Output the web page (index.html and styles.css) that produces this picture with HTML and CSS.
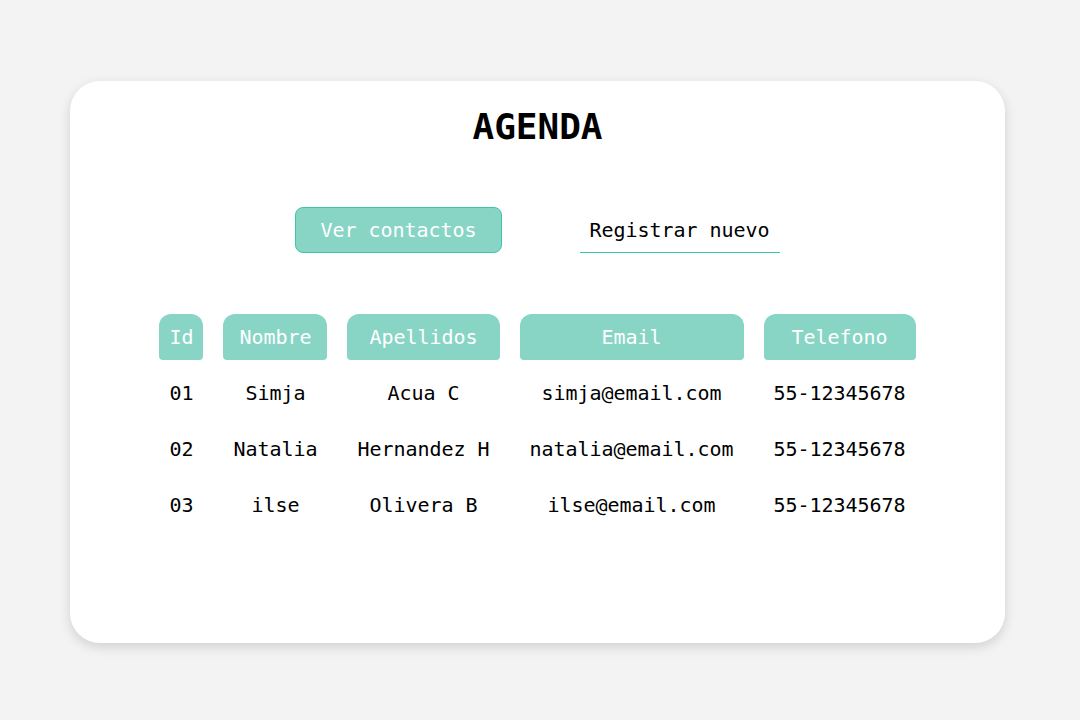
FILE: index.html
```html
<!DOCTYPE html>
<html lang="es">
<head>
<meta charset="utf-8">
<title>Agenda</title>
<link rel="stylesheet" href="styles.css">
</head>
<body>
<main class="card">
  <h1 class="title">AGENDA</h1>
  <nav class="actions">
    <button class="btn btn-primary">Ver contactos</button>
    <button class="btn btn-link">Registrar nuevo</button>
  </nav>
  <table class="contacts">
    <thead>
      <tr>
        <th>Id</th>
        <th>Nombre</th>
        <th>Apellidos</th>
        <th>Email</th>
        <th>Telefono</th>
      </tr>
    </thead>
    <tbody>
      <tr><td>01</td><td>Simja</td><td>Acua C</td><td>simja@email.com</td><td>55-12345678</td></tr>
      <tr><td>02</td><td>Natalia</td><td>Hernandez H</td><td>natalia@email.com</td><td>55-12345678</td></tr>
      <tr><td>03</td><td>ilse</td><td>Olivera B</td><td>ilse@email.com</td><td>55-12345678</td></tr>
    </tbody>
  </table>
</main>
</body>
</html>
```
FILE: styles.css
```css
* { box-sizing: border-box; }
html, body { margin: 0; padding: 0; }
body {
  background: #f3f3f3;
  font-family: "DejaVu Sans Mono", "Liberation Mono", monospace;
  color: #000;
  width: 1080px;
  height: 720px;
  overflow: hidden;
  padding-top: 81px;
}
.card {
  margin-left: 70px;
  width: 935px;
  height: 562px;
  background: #fff;
  border-radius: 30px;
  box-shadow: 0 4px 12px rgba(0,0,0,0.14);
  display: flex;
  flex-direction: column;
  align-items: center;
  padding-top: 24px;
}
.title {
  margin: 0;
  font-size: 36px;
  font-weight: bold;
  line-height: 44px;
}
.actions {
  display: flex;
  gap: 78px;
  margin-top: 58px;
  align-items: center;
}
.btn {
  font-family: inherit;
  font-size: 20px;
  letter-spacing: -0.04px;
  height: 46px;
  padding: 0 24px;
  background: none;
  border: none;
  color: #000;
}
.btn-primary {
  background: #88d5c6;
  border: 1px solid #3ec8a7;
  border-radius: 8px;
  color: #fff;
}
.btn-link {
  padding: 0 10px;
  border-bottom: 1px solid #3ec8a7;
}
.contacts {
  margin-top: 51px;
  border-collapse: separate;
  border-spacing: 20px 10px;
  font-size: 20px;
  letter-spacing: -0.04px;
}
.contacts th,
.contacts td {
  height: 46px;
  padding: 0 10px;
  text-align: center;
  white-space: nowrap;
}
.contacts th {
  background: #88d5c6;
  color: #fff;
  font-weight: normal;
  border-radius: 12px 12px 4px 4px;
}
```
